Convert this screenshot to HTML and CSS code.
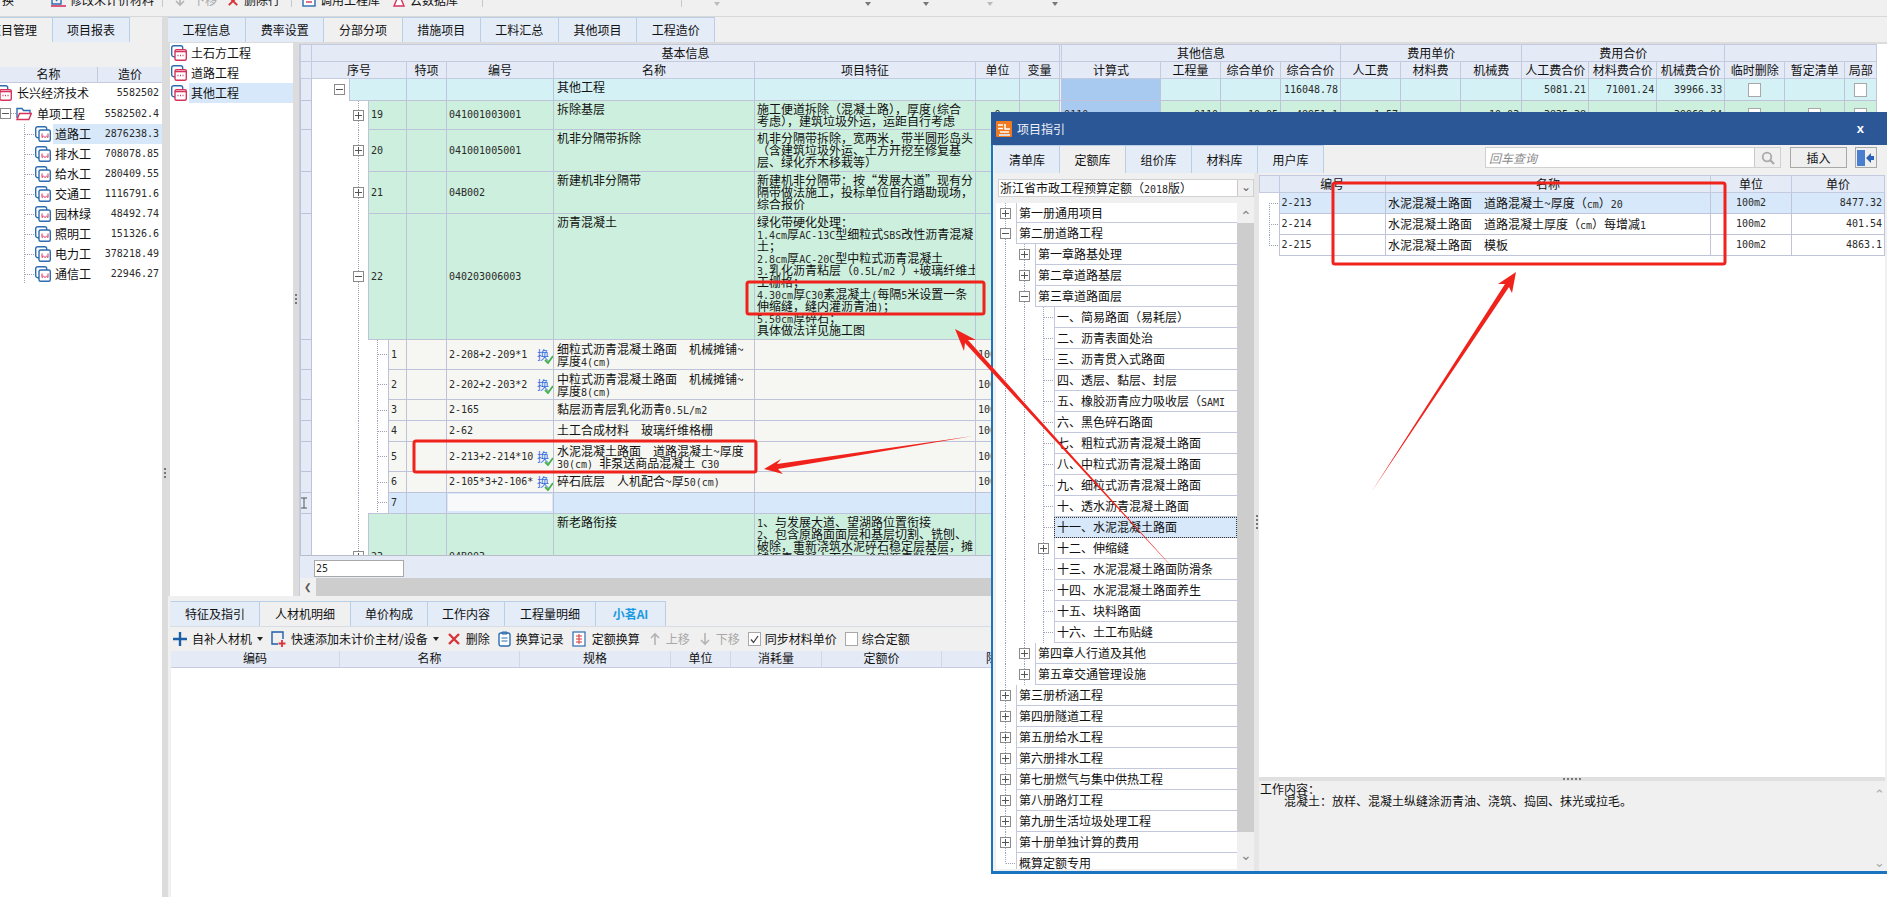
FILE: index.html
```html
<!DOCTYPE html>
<html lang="zh-CN">
<head>
    <meta charset="UTF-8">
    <title>项目指引</title>
    <link rel="stylesheet" href="styles.css">
</head>
<body>

<svg class="defs" width="0" height="0">
    <symbol id="ico-leaf" viewBox="0 0 16 16">
        <rect x="0.7" y="0.7" width="11" height="11" rx="2" fill="#fff" stroke="#2d6cb0" stroke-width="1.4"/>
        <rect x="4" y="4" width="11.3" height="11.3" rx="1.5" fill="#fff" stroke="#2d6cb0" stroke-width="1.4"/>
        <path d="M7 7.5v4l1.5-1.3 1.5 1.3 1.5-1.3 1.5 1.3v-4" fill="none" stroke="#d6335c"/>
    </symbol>
    <symbol id="ico-unit" viewBox="0 0 16 16">
        <rect x="0.7" y="0.7" width="11" height="11" rx="2" fill="#fff" stroke="#2d6cb0" stroke-width="1.4"/>
        <rect x="4" y="4.6" width="11.3" height="10.7" rx="1.5" fill="#fff" stroke="#d6335c" stroke-width="1.4"/>
        <path d="M4 6.5h11.3" stroke="#d6335c" stroke-width="1.6"/>
        <path d="M6.5 10.5h1M9 10.5h1M11.5 10.5h1" stroke="#d6335c" stroke-width="1.4"/>
    </symbol>
    <symbol id="ico-folder" viewBox="0 0 16 14">
        <path d="M1 11V1.5h5l1.5 2h6.5v3" fill="none" stroke="#2d6cb0" stroke-width="1.4"/>
        <path d="M1 12.5l2.5-6h11.8l-2.5 6z" fill="#fff" stroke="#d6335c" stroke-width="1.4"/>
    </symbol>
    <symbol id="ico-check" viewBox="0 0 10 9">
        <path d="M1 5l3 3 5-7" fill="none" stroke="#46b04a" stroke-width="1.8"/>
    </symbol>
    <symbol id="ico-x" viewBox="0 0 12 12">
        <path d="M1 1l10 10M11 1L1 11" stroke="#d8343a" stroke-width="2.4"/>
    </symbol>
    <symbol id="ico-up" viewBox="0 0 10 14">
        <path d="M5 13V2M1 6l4-4 4 4" fill="none" stroke="#b4b4b4" stroke-width="1.6"/>
    </symbol>
    <symbol id="ico-down" viewBox="0 0 10 14">
        <path d="M5 1v11M1 8l4 4 4-4" fill="none" stroke="#b4b4b4" stroke-width="1.6"/>
    </symbol>
</svg>

<div class="top-bar">
    <span class="ml2">换</span>
    <svg class="ml37 w15" width="15" height="16" viewBox="0 0 15 16"><path d="M1 1h9v12H1zM5 10l8-8" fill="none" stroke="#2d6cb0" stroke-width="1.4"/><path d="M0 15h15" stroke="#d6335c" stroke-width="1.6"/></svg>
    <span class="ml4">修改未计价材料</span>
    <i class="sep ml8"></i>
    <svg class="ml12" width="10" height="14"><use href="#ico-down"/></svg>
    <span class="ml8 off">下移</span>
    <svg class="ml11" width="10" height="12"><use href="#ico-x"/></svg>
    <span class="ml6">删除行</span>
    <i class="sep ml11"></i>
    <svg class="ml10" width="14" height="14" viewBox="0 0 14 14"><rect x="1" y="1" width="12" height="12" fill="#fff" stroke="#2d6cb0" stroke-width="1.4"/><path d="M4 9h6" stroke="#d6335c" stroke-width="1.4"/></svg>
    <span class="ml4">调用工程库</span>
    <svg class="ml12" width="14" height="14" viewBox="0 0 14 14"><path d="M2 13l5-12 5 12z" fill="#fff" stroke="#d6335c" stroke-width="1.4"/></svg>
    <span class="ml4">云数据库</span>
    <i class="sep ml24"></i>
    <i class="sep ml198"></i>
    <i class="caret caret-off ml32"></i>
    <i class="caret ml145"></i>
    <i class="caret ml52"></i>
    <i class="caret caret-off ml58"></i>
    <i class="caret ml59"></i>
</div>

<div class="workspace">

    <aside class="left-pane">
        <div class="tabs">
            <span class="tab tab-on tab-cut">项目管理</span>
            <span class="tab tab-report">项目报表</span>
        </div>
        <div class="left-blank"></div>
        <div class="left-head"><span class="lh-name">名称</span><span class="lh-val">造价</span></div>
        <div class="left-tree">
            <div class="lt-row">
                <svg class="root-ico" width="16" height="16"><use href="#ico-unit"/></svg>
                <div class="lt-cell cell-root"><span class="lt-name">长兴经济技术</span><span class="m">5582502</span></div>
            </div>
            <div class="lt-row lt-tall">
                <i class="tg minus"></i><i class="stub"></i>
                <svg width="16" height="14"><use href="#ico-folder"/></svg>
                <div class="lt-cell cell-folder"><span class="lt-name">单项工程</span><span class="m">5582502.4</span></div>
            </div>
            <div class="lt-row lt-leaf">
                <svg width="16" height="16"><use href="#ico-leaf"/></svg>
                <div class="lt-cell lt-sel"><span class="lt-name">道路工</span><span class="m">2876238.3</span></div>
            </div>
            <div class="lt-row lt-leaf">
                <svg width="16" height="16"><use href="#ico-leaf"/></svg>
                <div class="lt-cell"><span class="lt-name">排水工</span><span class="m">708078.85</span></div>
            </div>
            <div class="lt-row lt-leaf">
                <svg width="16" height="16"><use href="#ico-leaf"/></svg>
                <div class="lt-cell"><span class="lt-name">给水工</span><span class="m">280409.55</span></div>
            </div>
            <div class="lt-row lt-leaf">
                <svg width="16" height="16"><use href="#ico-leaf"/></svg>
                <div class="lt-cell"><span class="lt-name">交通工</span><span class="m">1116791.6</span></div>
            </div>
            <div class="lt-row lt-leaf">
                <svg width="16" height="16"><use href="#ico-leaf"/></svg>
                <div class="lt-cell"><span class="lt-name">园林绿</span><span class="m">48492.74</span></div>
            </div>
            <div class="lt-row lt-leaf">
                <svg width="16" height="16"><use href="#ico-leaf"/></svg>
                <div class="lt-cell"><span class="lt-name">照明工</span><span class="m">151326.6</span></div>
            </div>
            <div class="lt-row lt-leaf">
                <svg width="16" height="16"><use href="#ico-leaf"/></svg>
                <div class="lt-cell"><span class="lt-name">电力工</span><span class="m">378218.49</span></div>
            </div>
            <div class="lt-row lt-leaf">
                <svg width="16" height="16"><use href="#ico-leaf"/></svg>
                <div class="lt-cell"><span class="lt-name">通信工</span><span class="m">22946.27</span></div>
            </div>
        </div>
    </aside>

    <div class="v-split"><i class="grip grip-left"></i></div>

    <main class="right-pane">
        <div class="tabs">
            <span class="tab">工程信息</span>
            <span class="tab">费率设置</span>
            <span class="tab tab-on">分部分项</span>
            <span class="tab">措施项目</span>
            <span class="tab">工料汇总</span>
            <span class="tab">其他项目</span>
            <span class="tab">工程造价</span>
        </div>

        <div class="upper">
            <ul class="unit-list">
                <li><svg width="16" height="16"><use href="#ico-unit"/></svg><span>土石方工程</span></li>
                <li><svg width="16" height="16"><use href="#ico-unit"/></svg><span>道路工程</span></li>
                <li><svg width="16" height="16"><use href="#ico-unit"/></svg><span class="item-sel">其他工程</span></li>
            </ul>
            <div class="v-split v-split-mid"><i class="grip grip-mid"></i></div>

            <div class="grid">
                <div class="grid-view">
                    <table class="boq">
                        <colgroup>
                            <col class="c11"><col class="c38"><col class="c19"><col class="c20"><col class="c18"><col class="c40">
                            <col class="c107"><col class="c201"><col class="c221"><col class="c44"><col class="c40"><col class="c2">
                            <col class="c99"><col class="c60"><col class="c60"><col class="c60"><col class="c60"><col class="c60">
                            <col class="c61"><col class="c67"><col class="c68"><col class="c68"><col class="c60"><col class="c60"><col class="c32">
                        </colgroup>
                        <thead>
                            <tr class="hr1">
                                <th></th><th colspan="10">基本信息</th><th></th><th colspan="4">其他信息</th><th colspan="3">费用单价</th><th colspan="3">费用合价</th><th colspan="3"></th>
                            </tr>
                            <tr class="hr2">
                                <th></th><th colspan="4">序号</th><th>特项</th><th>编号</th><th>名称</th><th>项目特征</th><th>单位</th><th>变量</th><th></th>
                                <th>计算式</th><th>工程量</th><th>综合单价</th><th>综合合价</th><th>人工费</th><th>材料费</th><th>机械费</th>
                                <th>人工费合价</th><th>材料费合价</th><th>机械费合价</th><th>临时删除</th><th>暂定清单</th><th>局部</th>
                            </tr>
                        </thead>
                        <tbody>
                            <tr class="h22 cy">
                                <td class="rh"></td>
                                <td class="tc tc0"><i class="tg minus"></i></td>
                                <td colspan="3"></td><td></td><td></td><td class="nm">其他工程</td><td></td><td></td><td></td><td class="sp"></td>
                                <td class="calc"></td><td></td><td></td><td class="m r mid">116048.78</td><td></td><td></td><td></td>
                                <td class="m r mid">5081.21</td><td class="m r mid">71001.24</td><td class="m r mid">39966.33</td>
                                <td class="mid"><i class="cb"></i></td><td></td><td class="mid"><i class="cb"></i></td>
                            </tr>
                            <tr class="h29 gn">
                                <td class="rh"></td>
                                <td class="tc tc1" colspan="2"><i class="tg plus"></i></td>
                                <td class="m mid" colspan="2">19</td><td></td><td class="m mid">041001003001</td>
                                <td class="nm">拆除基层</td>
                                <td>施工便道拆除（混凝土路），厚度<span class="m">(</span>综合<br>考虑），建筑垃圾外运，运距自行考虑</td>
                                <td class="m ctr mid">0</td><td></td><td class="sp"></td>
                                <td class="calc m mid">0110</td><td class="m r mid">0110</td><td class="m r mid">10.05</td><td class="m r mid">48951.1</td>
                                <td class="m r mid">1.57</td><td></td><td class="m r mid">10.03</td><td class="m r mid">3835.38</td><td></td><td class="m r mid">39969.84</td>
                                <td class="mid"><i class="cb"></i></td><td class="mid"><i class="cb"></i></td><td class="mid"><i class="cb"></i></td>
                            </tr>
                            <tr class="h42 gn">
                                <td class="rh"></td>
                                <td class="tc tc1" colspan="2"><i class="tg plus"></i></td>
                                <td class="m mid" colspan="2">20</td><td></td><td class="m mid">041001005001</td>
                                <td class="nm">机非分隔带拆除</td>
                                <td>机非分隔带拆除，宽两米，带半圆形岛头<br>（含建筑垃圾外运、土方开挖至修复基<br>层、绿化乔木移栽等）</td>
                                <td></td><td></td><td colspan="14"></td>
                            </tr>
                            <tr class="h42 gn">
                                <td class="rh"></td>
                                <td class="tc tc1" colspan="2"><i class="tg plus"></i></td>
                                <td class="m mid" colspan="2">21</td><td></td><td class="m mid">04B002</td>
                                <td class="nm">新建机非分隔带</td>
                                <td>新建机非分隔带：按“发展大道”现有分<br>隔带做法施工，投标单位自行踏勘现场，<br>综合报价</td>
                                <td></td><td></td><td colspan="14"></td>
                            </tr>
                            <tr class="h126 gn">
                                <td class="rh"></td>
                                <td class="tc tc1" colspan="2"><i class="tg minus"></i></td>
                                <td class="m mid" colspan="2">22</td><td></td><td class="m mid">040203006003</td>
                                <td class="nm">沥青混凝土</td>
                                <td>绿化带硬化处理：<br>
                                    <span class="m">1.4cm</span>厚<span class="m">AC-13C</span>型细粒式<span class="m">SBS</span>改性沥青混凝<br>
                                    土；<br>
                                    <span class="m">2.8cm</span>厚<span class="m">AC-20C</span>型中粒式沥青混凝土<br>
                                    <span class="m">3.</span>乳化沥青粘层（<span class="m">0.5L/m2 </span>）<span class="m">+</span>玻璃纤维土<br>
                                    工栅格；<br>
                                    <span class="m">4.30cm</span>厚<span class="m">C30</span>素混凝土<span class="m">(</span>每隔<span class="m">5</span>米设置一条<br>
                                    伸缩缝，缝内灌沥青油<span class="m">)</span>；<br>
                                    <span class="m">5.50cm</span>厚碎石；<br>
                                    具体做法详见施工图</td>
                                <td></td><td></td><td colspan="14"></td>
                            </tr>
                            <tr class="h30 sub">
                                <td class="rh"></td>
                                <td class="tc tc2" colspan="3"></td>
                                <td class="m mid">1</td><td></td>
                                <td class="mid"><div class="code"><span class="m code-t">2-208+2-209*1</span><span class="huan">换</span><svg class="ok" width="10" height="9"><use href="#ico-check"/></svg></div></td>
                                <td class="nm">细粒式沥青混凝土路面　机械摊铺~<br>厚度<span class="m">4(cm)</span></td>
                                <td></td><td class="m mid">100m2</td><td></td><td colspan="14"></td>
                            </tr>
                            <tr class="h30 sub">
                                <td class="rh"></td>
                                <td class="tc tc2" colspan="3"></td>
                                <td class="m mid">2</td><td></td>
                                <td class="mid"><div class="code"><span class="m code-t">2-202+2-203*2</span><span class="huan">换</span><svg class="ok" width="10" height="9"><use href="#ico-check"/></svg></div></td>
                                <td class="nm">中粒式沥青混凝土路面　机械摊铺~<br>厚度<span class="m">8(cm)</span></td>
                                <td></td><td class="m mid">100m2</td><td></td><td colspan="14"></td>
                            </tr>
                            <tr class="h21 sub">
                                <td class="rh"></td>
                                <td class="tc tc2" colspan="3"></td>
                                <td class="m mid">3</td><td></td>
                                <td class="m mid">2-165</td>
                                <td class="nm">黏层沥青层乳化沥青<span class="m">0.5L/m2</span></td>
                                <td></td><td class="m mid">100m2</td><td></td><td colspan="14"></td>
                            </tr>
                            <tr class="h21 sub">
                                <td class="rh"></td>
                                <td class="tc tc2" colspan="3"></td>
                                <td class="m mid">4</td><td></td>
                                <td class="m mid">2-62</td>
                                <td class="nm">土工合成材料　玻璃纤维格栅</td>
                                <td></td><td class="m mid">100m2</td><td></td><td colspan="14"></td>
                            </tr>
                            <tr class="h30 sub">
                                <td class="rh"></td>
                                <td class="tc tc2" colspan="3"></td>
                                <td class="m mid">5</td><td></td>
                                <td class="mid"><div class="code"><span class="m code-t">2-213+2-214*10</span><span class="huan">换</span><svg class="ok" width="10" height="9"><use href="#ico-check"/></svg></div></td>
                                <td class="nm">水泥混凝土路面　道路混凝土~厚度<br><span class="m">30(cm) </span>非泵送商品混凝土<span class="m"> C30</span></td>
                                <td></td><td class="m mid">100m2</td><td></td><td colspan="14"></td>
                            </tr>
                            <tr class="h21 sub">
                                <td class="rh"></td>
                                <td class="tc tc2" colspan="3"></td>
                                <td class="m mid">6</td><td></td>
                                <td class="mid"><div class="code"><span class="m code-t">2-105*3+2-106*</span><span class="huan">换</span><svg class="ok" width="10" height="9"><use href="#ico-check"/></svg></div></td>
                                <td class="nm">碎石底层　人机配合~厚<span class="m">50(cm)</span></td>
                                <td></td><td class="m mid">100m2</td><td></td><td colspan="14"></td>
                            </tr>
                            <tr class="h21 cur">
                                <td class="rh"></td>
                                <td class="tc tc2" colspan="3"></td>
                                <td class="m mid">7</td><td></td>
                                <td class="edit"><div class="edit-box"></div></td>
                                <td></td><td></td><td></td><td></td><td colspan="14"></td>
                            </tr>
                            <tr class="h86 gn">
                                <td class="rh"></td>
                                <td class="tc tc1" colspan="2"><i class="tg plus"></i></td>
                                <td class="m mid" colspan="2">23</td><td></td><td class="m mid">04B003</td>
                                <td class="nm">新老路衔接</td>
                                <td><span class="m">1</span>、与发展大道、望湖路位置衔接<br><span class="m">2</span>、包含原路面面层和基层切割、铣刨、<br>破除，重新浇筑水泥碎石稳定层基层，摊<br>铺沥青混凝土面层，涂刷沥青粘结层，<br>具体做法详见施工图</td>
                                <td></td><td></td><td colspan="14"></td>
                            </tr>
                        </tbody>
                    </table>
                </div>
                <div class="grid-foot"><div class="foot-input m">25</div></div>
                <div class="h-scroll"><span class="h-btn">&#10094;</span></div>
            </div>
        </div>

        <div class="lower">
            <div class="tabs">
                <span class="tab tab-w90">特征及指引</span>
                <span class="tab tab-w91 tab-on">人材机明细</span>
                <span class="tab tab-w77">单价构成</span>
                <span class="tab tab-w77">工作内容</span>
                <span class="tab tab-w91">工程量明细</span>
                <span class="tab tab-w70 tab-ai">小茗AI</span>
            </div>
            <div class="sub-bar">
                <svg class="ml3" width="14" height="14" viewBox="0 0 14 14"><path d="M7 0v14M0 7h14" stroke="#1c5fa8" stroke-width="2.4"/></svg>
                <span class="ml5">自补人材机</span><i class="caret ml5"></i>
                <svg class="ml8" width="15" height="17" viewBox="0 0 15 17"><path d="M7 13H1V1h11v7" fill="none" stroke="#1c5fa8" stroke-width="1.4"/><path d="M11 9v7M7.5 12.500h7" stroke="#d8343a" stroke-width="1.8"/></svg>
                <span class="ml5">快速添加未计价主材/设备</span><i class="caret ml5"></i>
                <svg class="ml9" width="12" height="12"><use href="#ico-x"/></svg>
                <span class="ml6">删除</span>
                <svg class="ml8" width="13" height="16" viewBox="0 0 13 16"><rect x="1" y="2" width="11" height="13" rx="2" fill="#fff" stroke="#2d6cb0" stroke-width="1.4"/><path d="M4 1h5v2H4zM3.500 7h6M3.500 10h6" fill="none" stroke="#2d6cb0"/></svg>
                <span class="ml5">换算记录</span>
                <svg class="ml8" width="14" height="16" viewBox="0 0 14 16"><rect x="1" y="1" width="12" height="14" fill="#fff" stroke="#2d6cb0" stroke-width="1.2"/><path d="M4 5h6M4 8h6M4 11h6M7 3v10" stroke="#d8343a"/></svg>
                <span class="ml6">定额换算</span>
                <svg class="ml10" width="10" height="14"><use href="#ico-up"/></svg>
                <span class="ml6 off">上移</span>
                <svg class="ml10" width="10" height="14"><use href="#ico-down"/></svg>
                <span class="ml6 off">下移</span>
                <i class="cb cb-on"><svg width="9" height="9" viewBox="0 0 9 9"><path d="M1 4.500l2.500 3L8 1" fill="none" stroke="#444" stroke-width="1.3"/></svg></i>
                <span class="ml4">同步材料单价</span>
                <i class="cb"></i>
                <span class="ml4">综合定额</span>
            </div>
            <div class="sub-head">
                <span>编码</span><span>名称</span><span>规格</span><span>单位</span><span>消耗量</span><span>定额价</span><span class="sub-head-rest">除</span>
            </div>
            <div class="sub-body"></div>
        </div>
    </main>
</div>

<section class="dialog">
    <header class="d-title">
        <svg width="16" height="16" viewBox="0 0 16 16"><rect width="16" height="16" rx="1" fill="#ee7b22"/><path d="M2 4h5M2 7.500h5M9 3v5h5M4 11h9" fill="none" stroke="#fff" stroke-width="1.5"/><path d="M3 14h11" stroke="#ddd" stroke-width="2"/></svg>
        <span class="d-name">项目指引</span>
        <span class="d-close">x</span>
    </header>
    <div class="d-tabs">
        <span class="tab d-tab">清单库</span>
        <span class="tab d-tab tab-on">定额库</span>
        <span class="tab d-tab">组价库</span>
        <span class="tab d-tab">材料库</span>
        <span class="tab d-tab">用户库</span>
        <div class="d-search">
            <span class="d-ph">回车查询</span>
            <span class="d-glass"><svg width="14" height="14" viewBox="0 0 14 14"><circle cx="6" cy="6" r="4.300" fill="none" stroke="#aaa" stroke-width="1.800"/><path d="M9 9l4 4" stroke="#aaa" stroke-width="2.200"/></svg></span>
        </div>
        <span class="d-btn">插入</span>
        <span class="d-btn d-dock"><svg width="18" height="16" viewBox="0 0 18 16"><rect width="8" height="16" fill="#4a7fd0"/><path d="M9 8l5-5v3h3v4h-3v3z" fill="#2a62b8"/></svg></span>
    </div>
    <div class="d-body">
        <div class="d-left">
            <div class="d-combo"><span class="d-combo-t">浙江省市政工程预算定额（<span class="m">2018</span>版）</span><span class="d-combo-b">&#8964;</span></div>
            <div class="d-tree-wrap">
                <div class="d-tree">
                    <div class="tr"><span class="g g0"><i class="tg plus"></i></span><span class="lb">第一册通用项目</span></div>
                    <div class="tr"><span class="g g0"><i class="tg minus"></i></span><span class="lb">第二册道路工程</span></div>
                    <div class="tr"><span class="g g1"><i class="tg plus"></i></span><span class="lb">第一章路基处理</span></div>
                    <div class="tr"><span class="g g1"><i class="tg plus"></i></span><span class="lb">第二章道路基层</span></div>
                    <div class="tr"><span class="g g1"><i class="tg minus"></i></span><span class="lb">第三章道路面层</span></div>
                    <div class="tr"><span class="g g2"></span><span class="lb">一、简易路面（易耗层）</span></div>
                    <div class="tr"><span class="g g2"></span><span class="lb">二、沥青表面处治</span></div>
                    <div class="tr"><span class="g g2"></span><span class="lb">三、沥青贯入式路面</span></div>
                    <div class="tr"><span class="g g2"></span><span class="lb">四、透层、黏层、封层</span></div>
                    <div class="tr"><span class="g g2"></span><span class="lb">五、橡胶沥青应力吸收层（<span class="m">SAMI</span></span></div>
                    <div class="tr"><span class="g g2"></span><span class="lb">六、黑色碎石路面</span></div>
                    <div class="tr"><span class="g g2"></span><span class="lb">七、粗粒式沥青混凝土路面</span></div>
                    <div class="tr"><span class="g g2"></span><span class="lb">八、中粒式沥青混凝土路面</span></div>
                    <div class="tr"><span class="g g2"></span><span class="lb">九、细粒式沥青混凝土路面</span></div>
                    <div class="tr"><span class="g g2"></span><span class="lb">十、透水沥青混凝土路面</span></div>
                    <div class="tr"><span class="g g2"></span><span class="lb lb-sel">十一、水泥混凝土路面</span></div>
                    <div class="tr"><span class="g g2t"><i class="tg plus"></i></span><span class="lb">十二、伸缩缝</span></div>
                    <div class="tr"><span class="g g2"></span><span class="lb">十三、水泥混凝土路面防滑条</span></div>
                    <div class="tr"><span class="g g2"></span><span class="lb">十四、水泥混凝土路面养生</span></div>
                    <div class="tr"><span class="g g2"></span><span class="lb">十五、块料路面</span></div>
                    <div class="tr"><span class="g g2"></span><span class="lb">十六、土工布贴缝</span></div>
                    <div class="tr"><span class="g g1"><i class="tg plus"></i></span><span class="lb">第四章人行道及其他</span></div>
                    <div class="tr"><span class="g g1"><i class="tg plus"></i></span><span class="lb">第五章交通管理设施</span></div>
                    <div class="tr"><span class="g g0"><i class="tg plus"></i></span><span class="lb">第三册桥涵工程</span></div>
                    <div class="tr"><span class="g g0"><i class="tg plus"></i></span><span class="lb">第四册隧道工程</span></div>
                    <div class="tr"><span class="g g0"><i class="tg plus"></i></span><span class="lb">第五册给水工程</span></div>
                    <div class="tr"><span class="g g0"><i class="tg plus"></i></span><span class="lb">第六册排水工程</span></div>
                    <div class="tr"><span class="g g0"><i class="tg plus"></i></span><span class="lb">第七册燃气与集中供热工程</span></div>
                    <div class="tr"><span class="g g0"><i class="tg plus"></i></span><span class="lb">第八册路灯工程</span></div>
                    <div class="tr"><span class="g g0"><i class="tg plus"></i></span><span class="lb">第九册生活垃圾处理工程</span></div>
                    <div class="tr"><span class="g g0"><i class="tg plus"></i></span><span class="lb">第十册单独计算的费用</span></div>
                    <div class="tr"><span class="g g0h"></span><span class="lb">概算定额专用</span></div>
                </div>
                <div class="d-vbar">
                    <span class="sb-btn">&#8963;</span>
                    <span class="sb-track"></span>
                    <span class="sb-btn sb-btn-end">&#8964;</span>
                </div>
            </div>
        </div>

        <div class="d-split"><i class="grip grip-dlg"></i></div>

        <div class="d-right">
            <div class="d-grid">
                <table class="quota">
                    <colgroup><col class="q20"><col class="q106"><col class="q325"><col class="q81"><col class="q93"></colgroup>
                    <thead><tr><th></th><th>编号</th><th>名称</th><th>单位</th><th>单价</th></tr></thead>
                    <tbody>
                        <tr class="q-sel"><td class="q-b q-b1"></td><td class="m">2-213</td><td>水泥混凝土路面　道路混凝土~厚度（<span class="m">cm</span>）<span class="m">20</span></td><td class="m ctr">100m2</td><td class="m r">8477.32</td></tr>
                        <tr><td class="q-b q-b2"></td><td class="m">2-214</td><td>水泥混凝土路面　道路混凝土厚度（<span class="m">cm</span>）每增减<span class="m">1</span></td><td class="m ctr">100m2</td><td class="m r">401.54</td></tr>
                        <tr><td class="q-b q-b3"></td><td class="m">2-215</td><td>水泥混凝土路面　模板</td><td class="m ctr">100m2</td><td class="m r">4863.1</td></tr>
                    </tbody>
                </table>
            </div>
            <div class="h-split"><i class="dots"></i></div>
            <div class="d-note">
                <p>工作内容：<br><span class="d-indent">混凝土：放样、混凝土纵缝涂沥青油、浇筑、捣固、抹光或拉毛。</span></p>
                <div class="note-bar"><span>&#8963;</span><span>&#8964;</span></div>
            </div>
        </div>
    </div>
</section>

<!-- red markup drawn on top of the screenshot -->
<svg class="marks" width="1887" height="897" viewBox="0 0 1887 897">
    <g fill="none" stroke="#f0231c" stroke-width="3">
        <rect x="747" y="282" width="237" height="32" rx="2"/>
        <rect x="414" y="441" width="342" height="31" rx="2"/>
        <rect x="1333" y="183" width="392" height="81" rx="2"/>
    </g>
    <g fill="#f0231c">
        <polygon points="764,469 783,474 778,469 973,436 777,464 781,459"/>
        <polygon points="955,329 964,351 965,343 1182,578 968,340 976,340"/>
        <polygon points="1516,272 1512,293 1509,287 1372,491 1505,284 1498,284"/>
    </g>
    <path d="M301 498h6M301 508h6M304 498v10" fill="none" stroke="#555"/>
</svg>

</body>
</html>
```

FILE: styles.css
```css
* {
    margin: 0;
    padding: 0;
    box-sizing: border-box;
}

body {
    position: relative;
    width: 1887px;
    height: 897px;
    overflow: hidden;
    background: #f0f0f0;
    color: #111;
    font: 12px/14px "Noto Sans CJK SC", sans-serif;
}

i { font-style: normal; }

.defs { position: absolute; }

/* half width latin in the grids */
.m {
    font-family: "DejaVu Sans Mono", monospace;
    font-size: 10px;
    color: #2a2a2a;
}

/* a mono run must not push the 12px lines apart */
td span.m, .lb span.m, .d-combo-t span.m { line-height: 0; }

.r { text-align: right; }
.ctr { text-align: center; }
.off { color: #a8a8a8; }

.ml2 { margin-left: 2px; }
.ml3 { margin-left: 3px; }
.ml4 { margin-left: 4px; }
.ml5 { margin-left: 5px; }
.ml6 { margin-left: 6px; }
.ml8 { margin-left: 8px; }
.ml9 { margin-left: 9px; }
.ml10 { margin-left: 10px; }
.ml11 { margin-left: 11px; }
.ml12 { margin-left: 12px; }
.ml24 { margin-left: 24px; }
.ml32 { margin-left: 32px; }
.ml37 { margin-left: 37px; }
.ml52 { margin-left: 52px; }
.ml58 { margin-left: 58px; }
.ml59 { margin-left: 59px; }
.ml145 { margin-left: 145px; }
.ml198 { margin-left: 198px; }

svg { flex: none; display: block; }

/* top toolbar, cut by the edge of the shot */
.top-bar {
    display: flex;
    align-items: flex-end;
    height: 17px;
    padding-bottom: 9px;
    overflow: hidden;
    white-space: nowrap;
    border-bottom: 1px solid #d8d8d8;
}

.top-bar > * { flex: none; }

.sep {
    width: 1px;
    height: 12px;
    background: #c8c8c8;
}

.top-bar .caret { margin-bottom: 1px; }

.workspace {
    display: flex;
    height: 880px;
}

/* tabs */
.tabs {
    display: flex;
    height: 25px;
    flex: none;
}

.tab {
    display: flex;
    align-items: center;
    justify-content: center;
    width: 78.200px;
    flex: none;
    background: #e4ecf8;
    border: 1px solid #b9cfe6;
    border-left: 0;
    border-bottom: 0;
    white-space: nowrap;
    overflow: hidden;
}

.tab-on { background: #f0f0f0; }

.tab-cut {
    width: 53px;
    justify-content: flex-end;
    padding-right: 15px;
}

.tab-report { width: 77px; }
.tab-w90 { width: 90px; border-left: 1px solid #e4ecf8; }
.tab-w91 { width: 91px; }
.tab-w77 { width: 77px; }
.tab-w70 { width: 70px; }
.tab-ai { color: #1a9be0; font-weight: 700; }

/* left project tree */
.left-pane {
    width: 162px;
    flex: none;
    display: flex;
    flex-direction: column;
}

.left-blank {
    height: 25px;
    flex: none;
}

.left-head {
    display: flex;
    height: 16px;
    flex: none;
    background: #e4eaf6;
    border-bottom: 1px solid #c4cae0;
    text-align: center;
}

.lh-name { width: 98px; border-right: 1px solid #c4cae0; }
.lh-val { flex: 1; }

.left-tree {
    flex: 1;
    background: #fff;
    --dv: repeating-linear-gradient(to bottom, #a0a0b8 0 1px, transparent 1px 2px);
    --dh: repeating-linear-gradient(to right, #a0a0b8 0 1px, transparent 1px 2px);
}

.lt-row {
    display: flex;
    align-items: center;
    height: 20px;
    overflow: hidden;
}

.lt-tall { height: 21px; }

.root-ico { margin-left: -4px; }

.lt-cell {
    flex: 1;
    display: flex;
    align-items: center;
    justify-content: space-between;
    height: 100%;
    padding-right: 3px;
    margin-right: 0;
}

.cell-root { padding-left: 5px; }
.cell-folder { padding-left: 5px; }

.lt-leaf {
    padding-left: 35px;
    background: var(--dv) 24px 0 / 1px 100% no-repeat, var(--dh) 25px center / 10px 1px no-repeat;
}

.lt-leaf .lt-cell { margin-left: 2px; padding-left: 2px; }
.lt-sel { background: #d6e8f9; }

.tg {
    display: block;
    flex: none;
    width: 11px;
    height: 11px;
    border: 1px solid #8a8a8a;
    background: #fff;
}

.tg.minus {
    background: linear-gradient(#555, #555) center / 7px 1px no-repeat, #fff;
}

.tg.plus {
    background: linear-gradient(#555, #555) center / 7px 1px no-repeat,
                linear-gradient(#555, #555) center / 1px 7px no-repeat, #fff;
}

.stub {
    width: 5px;
    border-top: 1px dotted #a0a0b8;
}

/* splitters */
.v-split {
    display: flex;
    align-items: center;
    justify-content: center;
    width: 6px;
    flex: none;
    background: #dcdcdc;
}

.grip {
    display: block;
    width: 2px;
    height: 12px;
    background: repeating-linear-gradient(to bottom, #777 0 2px, transparent 2px 4px);
}

.grip-left { margin-top: 34px; }
.grip-mid { margin-top: -40px; }

/* right side */
.right-pane {
    flex: 1;
    min-width: 0;
    display: flex;
    flex-direction: column;
}

.upper {
    display: flex;
    height: 554px;
    flex: none;
    background: #dcdcdc;
    padding: 1px 0 0 2px;
}

.unit-list {
    width: 123px;
    flex: none;
    list-style: none;
    background: #fff;
}

.unit-list li {
    display: flex;
    align-items: center;
    gap: 2px;
    height: 20px;
    padding-left: 1px;
}

.unit-list span {
    flex: 1;
    height: 100%;
    line-height: 20px;
    padding-left: 2px;
}

.item-sel { background: #d6e8f9; }

.grid {
    flex: 1;
    min-width: 0;
    display: flex;
    flex-direction: column;
    margin-top: 1px;
    border-left: 1px solid #c4cae0;
}

.grid-view {
    height: 511px;
    flex: none;
    overflow: hidden;
    background: #fff;
}

/* bill of quantities */
.boq, .quota {
    table-layout: fixed;
    border-collapse: collapse;
}

.boq { width: 1576px; }

.c2 { width: 2px; } .c11 { width: 11px; } .c18 { width: 18px; } .c19 { width: 19px; }
.c20 { width: 20px; } .c32 { width: 32px; } .c38 { width: 38px; } .c40 { width: 40px; }
.c44 { width: 44px; } .c60 { width: 60px; } .c61 { width: 61px; } .c67 { width: 67px; }
.c68 { width: 68px; } .c99 { width: 99px; } .c107 { width: 107px; } .c201 { width: 201px; }
.c221 { width: 221px; }

.boq th, .quota th {
    background: #e4eaf6;
    font-weight: 400;
    border: 1px solid #c4cae0;
    overflow: hidden;
    white-space: nowrap;
}

.hr1 th { height: 17px; }
.hr2 th { height: 17px; }

.boq td {
    border: 1px solid #bfc3da;
    padding: 2px 2px 0;
    line-height: 12px;
    vertical-align: top;
    white-space: nowrap;
    overflow: hidden;
}

.boq .mid { vertical-align: middle; padding-top: 0; }
.boq .nm { padding-left: 3px; }

.boq .rh { background: #e4eaf6; }
.boq .sp { background: #eef2fa; }
.boq .calc { background: #a8c9f0; }

.h21 td { height: 21px; }
.h22 td { height: 22px; }
.h29 td { height: 29px; }
.h30 td { height: 30px; }
.h42 td { height: 42px; }
.h86 td { height: 86px; }
.h126 td { height: 126px; }

.cy td { background: #d4f2f5; }
.gn td { background: #cdefdd; }
.sub td { background: #f6f7f2; }
.cur td { background: #d6e8f9; }

.sub .nm { padding-top: 3px; }

/* white tree cells on the left of the rows */
.boq .tc {
    --dv: repeating-linear-gradient(to bottom, #a0a0b8 0 1px, transparent 1px 2px);
    --dh: repeating-linear-gradient(to right, #a0a0b8 0 1px, transparent 1px 2px);
    background-color: #fff;
    border-top: 0;
    border-bottom: 0;
    vertical-align: middle;
    padding-top: 0;
}

.boq .tc0 { padding-left: 22px; }

.boq .tc1 {
    padding-left: 41px;
    background-image: var(--dv);
    background-size: 1px 100%;
    background-position: 46px 0;
    background-repeat: no-repeat;
}

.boq .tc2 {
    background-image: var(--dv), var(--dv), var(--dh);
    background-size: 1px 100%, 1px 100%, 10px 1px;
    background-position: 46px 0, 65px 0, 66px center;
    background-repeat: no-repeat;
}

.code {
    display: flex;
    align-items: center;
}

.code-t {
    width: 85px;
    flex: none;
    overflow: hidden;
    line-height: 12px;
}

td .code-t.m { line-height: 12px; }

.huan {
    color: #3a6fe0;
    margin-left: 3px;
}

.ok { margin: 9px 0 0 -5px; }

.boq .edit { padding: 1px; }

.edit-box {
    height: 17px;
    background: #f7f9fb;
}

.cb {
    display: block;
    flex: none;
    width: 13px;
    height: 14px;
    margin: 0 auto;
    background: #fff;
    border: 1px solid #a8a8a8;
}

.sub-bar .cb { margin: 0 0 0 8px; }

.cb-on {
    display: flex;
    align-items: center;
    justify-content: center;
}

/* footer of the grid */
.grid-foot {
    height: 23px;
    flex: none;
    padding: 4px 0 0 14px;
    background: #e4eaf6;
    border-top: 1px solid #b8bcc8;
}

.foot-input {
    width: 90px;
    height: 17px;
    padding-left: 1px;
    line-height: 15px;
    background: #fff;
    border: 1px solid #a8a8a8;
}

.h-scroll {
    flex: 1;
    background: #cdcdcd;
}

.h-btn {
    display: block;
    width: 16px;
    height: 100%;
    text-align: center;
    font-size: 9px;
    line-height: 18px;
    color: #555;
    background: #f0f0f0;
}

/* detail panel under the grid */
.lower {
    flex: 1;
    display: flex;
    flex-direction: column;
    padding: 5px 0 0 2px;
    background: #f0f0f0;
}

.sub-bar {
    display: flex;
    align-items: center;
    height: 25px;
    flex: none;
    white-space: nowrap;
    border-top: 1px solid #d8dce4;
}

.caret {
    width: 0;
    height: 0;
    border: 3px solid transparent;
    border-top: 4px solid #222;
    border-bottom: 0;
}

.top-bar .caret { border-top-color: #777; }
.top-bar .caret-off { border-top-color: #bbb; }

.sub-head {
    display: grid;
    grid-template-columns: 169px 180px 151px 60px 91px 120px 1fr;
    height: 17px;
    flex: none;
    margin-left: 1px;
    background: #e4eaf6;
    border-bottom: 1px solid #c4cae0;
    text-align: center;
}

.sub-head span { border-right: 1px solid #d2d7e8; }
.sub-head-rest { text-align: left; padding-left: 44px; }

.sub-body {
    flex: 1;
    margin-left: 1px;
    background: #fff;
}

/* 项目指引 window */
.dialog {
    position: absolute;
    left: 991px;
    top: 112px;
    width: 896px;
    height: 762px;
    display: flex;
    flex-direction: column;
    background: #f0f0f0;
    border-left: 2px solid #1b74c0;
    border-bottom: 3px solid #1b74c0;
}

.d-title {
    display: flex;
    align-items: center;
    height: 33px;
    flex: none;
    margin-left: -2px;
    padding-left: 5px;
    background: #2b5797;
    color: #eef1f7;
}

.d-name { margin-left: 5px; }

.d-close {
    margin-left: auto;
    margin-right: 23px;
    font: 700 13px "Liberation Sans", sans-serif;
    color: #fff;
}

.d-tabs {
    display: flex;
    align-items: flex-start;
    height: 28px;
    flex: none;
    padding-left: 1px;
}

.d-tab {
    width: 66px;
    height: 28px;
}

.d-tab:first-child { border-left: 1px solid #e4ecf8; }

.d-search {
    display: flex;
    width: 296px;
    height: 21px;
    margin: 2px 0 0 auto;
    background: #fff;
    border: 1px solid #d0d0d0;
}

.d-ph {
    flex: 1;
    padding-left: 3px;
    line-height: 19px;
    font-style: italic;
    color: #8a8a8a;
}

.d-glass {
    display: flex;
    align-items: center;
    justify-content: center;
    width: 26px;
    background: #f0f0f0;
    border-left: 1px solid #c8c8c8;
}

.d-btn {
    display: flex;
    align-items: center;
    justify-content: center;
    width: 57px;
    height: 21px;
    margin: 2px 0 0 9px;
    background: #efefef;
    border: 1px solid #a8a8a8;
}

.d-dock {
    width: 22px;
    margin: 2px 10px 0 8px;
}

.d-body {
    flex: 1;
    min-height: 0;
    display: flex;
}

.d-left {
    width: 261px;
    flex: none;
    padding: 6px 0 2px 3px;
    display: flex;
    flex-direction: column;
}

.d-combo {
    display: flex;
    height: 18px;
    flex: none;
    margin: 0 0 6px 2px;
    background: #fff;
    border: 1px solid #d0d0d0;
}

.d-combo-t {
    flex: 1;
    padding-left: 1px;
    line-height: 16px;
    white-space: nowrap;
    overflow: hidden;
}

.d-combo-b {
    width: 16px;
    text-align: center;
    line-height: 12px;
    color: #666;
    background: #f0f0f0;
    border-left: 1px solid #c8c8c8;
}

.d-tree-wrap {
    flex: 1;
    min-height: 0;
    display: flex;
}

.d-tree {
    flex: 1;
    min-width: 0;
    overflow: hidden;
    background: #fff;
    --dv: repeating-linear-gradient(to bottom, #a0a0b8 0 1px, transparent 1px 2px);
    --dh: repeating-linear-gradient(to right, #a0a0b8 0 1px, transparent 1px 2px);
}

.tr {
    display: flex;
    height: 21px;
}

.tr:first-child { height: 20px; }

.g {
    display: flex;
    align-items: center;
    flex: none;
    height: 100%;
}

.g0 { width: 20px; padding-left: 4px; background: var(--dv) 9px 0 / 1px 100% no-repeat; }
.g0h { width: 20px; background: var(--dv) 9px 0 / 1px 50% no-repeat, var(--dh) 10px center / 10px 1px no-repeat; }
.g1 { width: 39px; padding-left: 23px; background: var(--dv) 9px 0 / 1px 100% no-repeat, var(--dv) 28px 0 / 1px 100% no-repeat; }
.g2 { width: 58px; background: var(--dv) 9px 0 / 1px 100% no-repeat, var(--dv) 28px 0 / 1px 100% no-repeat, var(--dv) 47px 0 / 1px 100% no-repeat, var(--dh) 48px center / 10px 1px no-repeat; }
.g2t { width: 58px; padding-left: 42px; background: var(--dv) 9px 0 / 1px 100% no-repeat, var(--dv) 28px 0 / 1px 100% no-repeat, var(--dv) 47px 0 / 1px 100% no-repeat; }

.lb {
    flex: 1;
    min-width: 0;
    padding-left: 2px;
    line-height: 20px;
    white-space: nowrap;
    overflow: hidden;
    border-left: 1px solid #c4c8dc;
    border-bottom: 1px solid #c4c8dc;
}

.lb-sel {
    background: #d6e8f9;
    outline: 1px dotted #333;
    outline-offset: -1px;
}

.d-vbar {
    width: 17px;
    flex: none;
    display: flex;
    flex-direction: column;
    background: #f0f0f0;
    color: #888;
    text-align: center;
}

.sb-btn {
    height: 20px;
    flex: none;
    font-size: 14px;
    line-height: 24px;
}

.sb-btn-end {
    height: 37px;
    line-height: 44px;
}

.sb-track {
    flex: 1;
    background: #cdcdcd;
}

.d-split {
    display: flex;
    align-items: center;
    justify-content: center;
    width: 5px;
    flex: none;
    background: #e6e6e6;
}

.grip-dlg { height: 14px; margin-top: 0; }

.d-right {
    flex: 1;
    min-width: 0;
    display: flex;
    flex-direction: column;
    padding: 2px 2px 0 0;
}

.d-grid {
    flex: 1;
    background: #fff;
}

.quota { width: 625px; }

.q20 { width: 19.500px; } .q106 { width: 106.500px; } .q325 { width: 325px; } .q81 { width: 81px; } .q93 { width: 93px; }

.quota th { height: 17px; }

.quota td {
    height: 21px;
    padding: 0 2px;
    line-height: 14px;
    border: 1px solid #c0c4d8;
    white-space: nowrap;
    overflow: hidden;
}

.q-sel td { background: #d6e8f9; }

.quota .q-b {
    --dv: repeating-linear-gradient(to bottom, #a0a0b8 0 1px, transparent 1px 2px);
    --dh: repeating-linear-gradient(to right, #a0a0b8 0 1px, transparent 1px 2px);
    background: var(--dv) 9px 0 / 1px 100% no-repeat, var(--dh) 9px center / 10px 1px no-repeat, #fff;
    border-top: 0;
    border-bottom: 0;
    border-left: 0;
}

.quota .q-b1 { background: var(--dv) 9px 100% / 1px 50% no-repeat, var(--dh) 9px center / 10px 1px no-repeat, #fff; }
.quota .q-b3 { background: var(--dv) 9px 0 / 1px 50% no-repeat, var(--dh) 9px center / 10px 1px no-repeat, #fff; }

.h-split {
    display: flex;
    align-items: center;
    justify-content: center;
    height: 4px;
    flex: none;
    background: #e0e0e0;
}

.dots {
    display: block;
    width: 18px;
    height: 2px;
    background: repeating-linear-gradient(to right, #777 0 2px, transparent 2px 4px);
}

.d-note {
    display: flex;
    height: 90px;
    flex: none;
    line-height: 12px;
    background: #f0f0f0;
}

.d-note p { flex: 1; padding: 2px 0 0 1px; }
.d-indent { padding-left: 24px; }

.note-bar {
    width: 12px;
    display: flex;
    flex-direction: column;
    justify-content: space-between;
    color: #aaa;
    font-size: 13px;
    line-height: 14px;
    padding: 6px 0 2px;
    text-align: center;
}

/* red arrows and boxes over everything */
.marks {
    position: absolute;
    left: 0;
    top: 0;
    pointer-events: none;
}
```
